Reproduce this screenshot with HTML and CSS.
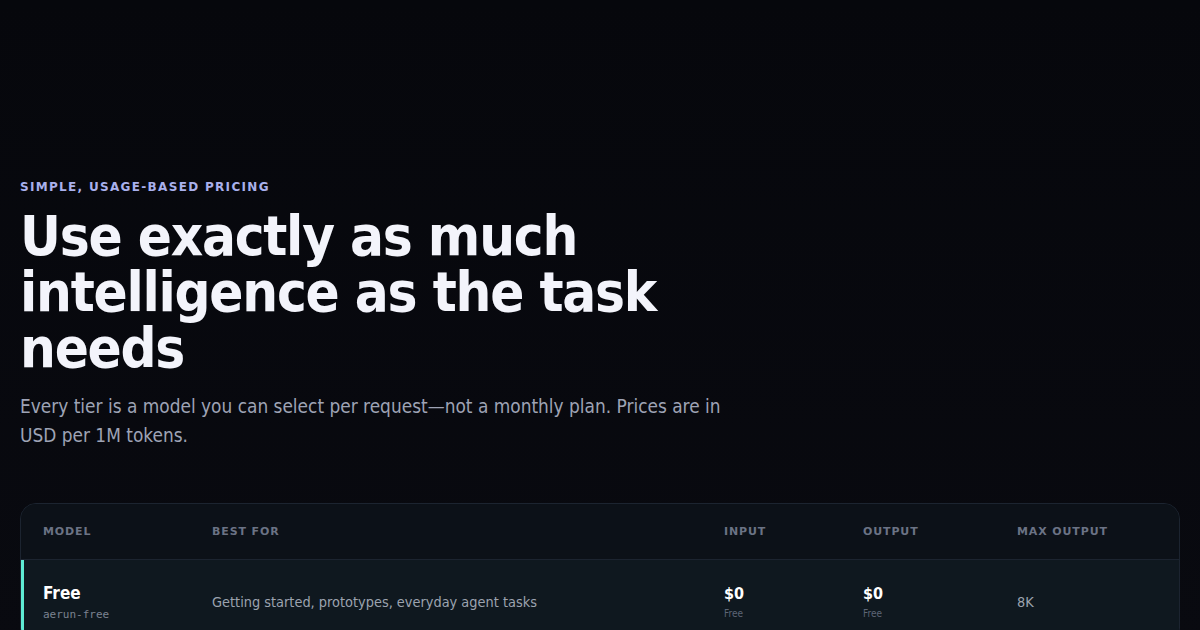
FILE: index.html
```html
<!DOCTYPE html>
<html lang="en">
<head>
    <meta charset="UTF-8">
    <meta name="viewport" content="width=device-width, initial-scale=1.0">
    <title>Pricing | Aerun</title>
    <link rel="stylesheet" href="styles.css">
</head>
<body>
    <main class="container">
        <section class="hero">
            <p class="eyebrow">Simple, usage-based pricing</p>
            <h1>Use exactly as much intelligence as the task needs</h1>
            <p class="lead">Every tier is a model you can select per request—not a monthly plan. Prices are in USD per 1M tokens.</p>
        </section>

        <div class="pricing-table">
            <div class="table-row table-head">
                <div>Model</div>
                <div>Best for</div>
                <div>Input</div>
                <div>Output</div>
                <div>Max output</div>
            </div>
            <div class="table-row tier tier-free">
                <div class="model">
                    <span class="model-name">Free</span>
                    <code class="model-id">aerun-free</code>
                </div>
                <div class="best-for">Getting started, prototypes, everyday agent tasks</div>
                <div class="price">
                    <span class="amount">$0</span>
                    <span class="note">Free</span>
                </div>
                <div class="price">
                    <span class="amount">$0</span>
                    <span class="note">Free</span>
                </div>
                <div class="max-output">8K</div>
            </div>
        </div>
    </main>
</body>
</html>
```

FILE: styles.css
```css
:root {
    --text: #f3f4fb;
    --muted: #9ca3af;
    --dim: #6b7385;
    --accent: #a9b0ec;
    --teal: #5eead4;
    --border: #1c2430;
}

* {
    margin: 0;
    padding: 0;
    box-sizing: border-box;
}

body {
    background: linear-gradient(180deg, #06070c 0%, #090a10 100%);
    color: var(--text);
    font-family: 'DejaVu Sans Condensed', 'DejaVu Sans', sans-serif;
    min-height: 630px;
    overflow: hidden;
}

.container {
    max-width: 1200px;
    padding: 179px 20px 0;
}

.eyebrow {
    font-family: 'DejaVu Sans', sans-serif;
    font-size: 12px;
    font-weight: 700;
    letter-spacing: 0.11em;
    text-transform: uppercase;
    color: var(--accent);
    line-height: 16px;
    margin-bottom: 13px;
}

h1 {
    font-size: 56px;
    line-height: 56px;
    font-weight: 700;
    letter-spacing: -0.022em;
    max-width: 700px;
    margin-bottom: 16px;
}

.lead {
    font-size: 18.9px;
    line-height: 29px;
    color: #9ea3b5;
    max-width: 720px;
}

.pricing-table {
    margin-top: 53px;
    border: 1px solid var(--border);
    border-radius: 16px;
    overflow: hidden;
    background: #0f161d;
}

.table-row {
    display: grid;
    grid-template-columns: 169px 512px 139px 154px 1fr;
    align-items: center;
    padding: 0 22px;
}

.table-head {
    height: 56px;
    background: #0c1118;
    border-bottom: 1px solid var(--border);
    font-family: 'DejaVu Sans', sans-serif;
    font-size: 11px;
    font-weight: 700;
    letter-spacing: 0.08em;
    text-transform: uppercase;
    color: var(--dim);
}

.tier {
    height: 83px;
    background: #0f181f;
    border-left: 3px solid var(--teal);
    padding-left: 19px;
}

.model,
.price {
    display: flex;
    flex-direction: column;
    gap: 5px;
}

.model-name {
    font-size: 17px;
    font-weight: 700;
    color: #fff;
}

.model-id {
    font-family: 'DejaVu Sans Mono', monospace;
    font-size: 11px;
    color: #7b8290;
}

.best-for,
.max-output {
    font-size: 14.4px;
    color: var(--muted);
}

.amount {
    font-size: 16px;
    font-weight: 700;
    color: #fff;
}

.note {
    font-size: 10px;
    color: #5d6576;
}
```
